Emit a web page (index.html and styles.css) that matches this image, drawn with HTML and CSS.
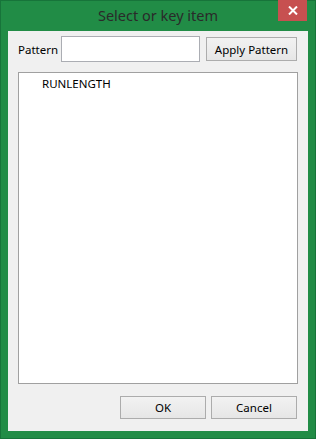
FILE: index.html
```html
<!DOCTYPE html>
<html lang="en">
<head>
    <meta charset="UTF-8">
    <title>Select or key item</title>
    <link rel="stylesheet" href="styles.css">
</head>
<body>
    <div class="window">
        <div class="titlebar">
            <span class="title">Select or key item</span>
            <button class="close-btn" aria-label="Close">
                <svg width="10" height="9" viewBox="0 0 10 9">
                    <path d="M1 0.5 L9 8.5 M9 0.5 L1 8.5" stroke="#fff" stroke-width="2"/>
                </svg>
            </button>
        </div>
        <div class="client">
            <div class="pattern-row">
                <label for="pattern">Pattern</label>
                <input type="text" id="pattern">
                <button class="btn apply-btn">Apply Pattern</button>
            </div>
            <div class="listbox">
                <div class="item">RUNLENGTH</div>
            </div>
            <div class="footer">
                <button class="btn">OK</button>
                <button class="btn">Cancel</button>
            </div>
        </div>
    </div>
</body>
</html>
```

FILE: styles.css
```css
* {
    margin: 0;
    padding: 0;
    box-sizing: border-box;
}

body {
    font-family: "Noto Sans", "Open Sans", sans-serif;
    font-size: 11.5px;
    color: #000;
    background: #fff;
}

.window {
    position: relative;
    width: 316px;
    height: 439px;
    background: #218c46;
    border: 1px solid #17743a;
    padding: 0 7px 7px;
    display: flex;
    flex-direction: column;
}

.titlebar {
    height: 30px;
    padding-bottom: 3px;
    display: flex;
    align-items: center;
    justify-content: center;
}

.title {
    font-size: 14.5px;
    color: #2a2a2a;
}

.close-btn {
    position: absolute;
    top: -1px;
    right: 8px;
    width: 29px;
    height: 21px;
    background: #c75050;
    border: none;
    display: flex;
    align-items: center;
    justify-content: center;
}

.client {
    flex: 1;
    background: #f0f0f0;
    padding: 5px 11px 12px 10px;
    display: flex;
    flex-direction: column;
}

.pattern-row {
    display: flex;
    align-items: center;
    height: 26px;
}

.pattern-row label {
    width: 43px;
}

.pattern-row input {
    width: 139px;
    height: 26px;
    border: 1px solid #abadb3;
    background: #fff;
    font: inherit;
}

.btn {
    font: inherit;
    color: #000;
    height: 23px;
    width: 86px;
    border: 1px solid #acacac;
    background: linear-gradient(#f2f2f2, #e6e6e6);
}

.apply-btn {
    width: 91px;
    height: 24px;
    margin-left: 6px;
}

.listbox {
    margin-top: 10px;
    margin-right: -1px;
    height: 312px;
    background: #fff;
    border: 1px solid #a0a0a0;
    padding: 3px 0 0 23px;
}

.item {
    line-height: 16px;
}

.footer {
    margin-top: auto;
    display: flex;
    justify-content: flex-end;
    gap: 5px;
}
```
